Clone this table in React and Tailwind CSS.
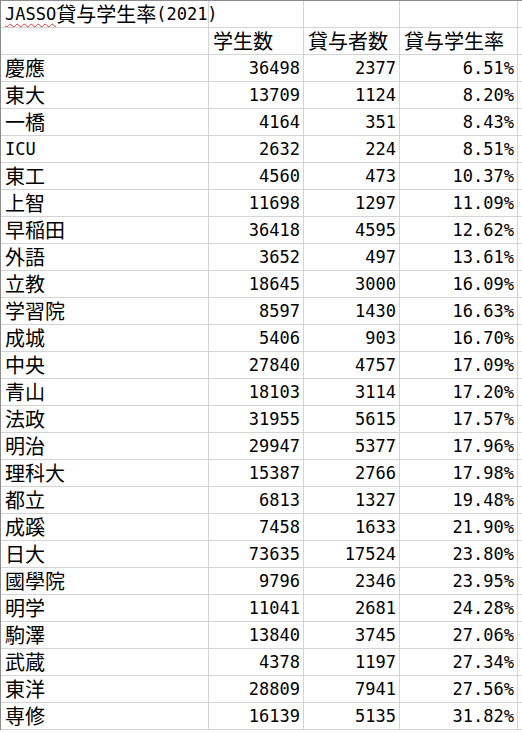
const rows = [
  ["慶應", "36498", "2377", "6.51%"],
  ["東大", "13709", "1124", "8.20%"],
  ["一橋", "4164", "351", "8.43%"],
  ["ICU", "2632", "224", "8.51%"],
  ["東工", "4560", "473", "10.37%"],
  ["上智", "11698", "1297", "11.09%"],
  ["早稲田", "36418", "4595", "12.62%"],
  ["外語", "3652", "497", "13.61%"],
  ["立教", "18645", "3000", "16.09%"],
  ["学習院", "8597", "1430", "16.63%"],
  ["成城", "5406", "903", "16.70%"],
  ["中央", "27840", "4757", "17.09%"],
  ["青山", "18103", "3114", "17.20%"],
  ["法政", "31955", "5615", "17.57%"],
  ["明治", "29947", "5377", "17.96%"],
  ["理科大", "15387", "2766", "17.98%"],
  ["都立", "6813", "1327", "19.48%"],
  ["成蹊", "7458", "1633", "21.90%"],
  ["日大", "73635", "17524", "23.80%"],
  ["國學院", "9796", "2346", "23.95%"],
  ["明学", "11041", "2681", "24.28%"],
  ["駒澤", "13840", "3745", "27.06%"],
  ["武蔵", "4378", "1197", "27.34%"],
  ["東洋", "28809", "7941", "27.56%"],
  ["専修", "16139", "5135", "31.82%"],
];

// split text into latin / cjk runs so each gets its own font + size
function Txt({ text }) {
  const parts = text.match(/[\x00-\x7f]+|[^\x00-\x7f]+/g) || [];
  return parts.map((p, i) =>
    /^[\x00-\x7f]/.test(p) ? (
      <span key={i} className="font-['DejaVu_Sans_Mono',monospace] text-[17px]">{p}</span>
    ) : (
      <span key={i} className="font-['Noto_Sans_CJK_JP',sans-serif] text-[20px]">{p}</span>
    )
  );
}

function Cell({ children, right, className = "" }) {
  return (
    <div
      className={`h-[27px] border-r border-b border-[#d4d4d4] flex items-center leading-none overflow-visible whitespace-nowrap ${
        right ? "justify-end pr-[3px]" : "pl-[4px]"
      } ${className}`}
    >
      {children}
    </div>
  );
}

export default function App() {
  return (
    <div className="w-[522px] h-[732px] bg-white text-black overflow-hidden">
      <div className="grid grid-cols-[208px_95px_96px_118px_1fr] border-l border-t border-[#8c8c8c]">
        <Cell className="relative z-10">
          <span className="underline decoration-wavy decoration-[#e23a3a] decoration-1 underline-offset-[3px] font-['DejaVu_Sans_Mono',monospace] text-[17px]">
            JASSO
          </span>
          <Txt text="貸与学生率(2021)" />
        </Cell>
        <Cell />
        <Cell />
        <Cell />
        <Cell />

        <Cell />
        <Cell><Txt text="学生数" /></Cell>
        <Cell><Txt text="貸与者数" /></Cell>
        <Cell><Txt text="貸与学生率" /></Cell>
        <Cell />

        {rows.map((r) => (
          <div key={r[0]} className="contents">
            <Cell><Txt text={r[0]} /></Cell>
            <Cell right><Txt text={r[1]} /></Cell>
            <Cell right><Txt text={r[2]} /></Cell>
            <Cell right><Txt text={r[3]} /></Cell>
            <Cell />
          </div>
        ))}
      </div>
    </div>
  );
}
